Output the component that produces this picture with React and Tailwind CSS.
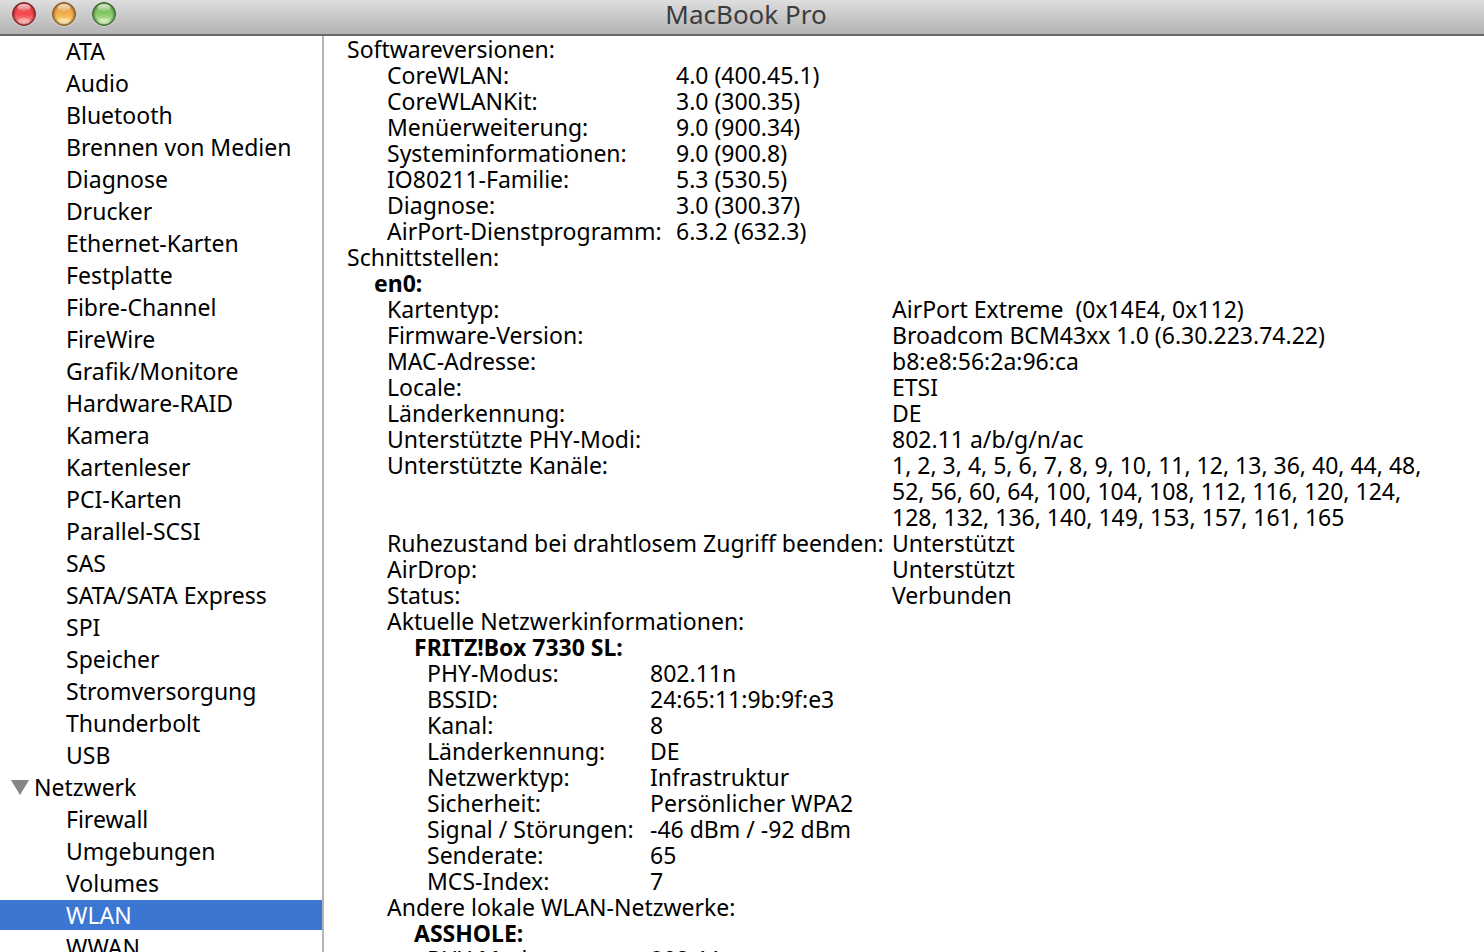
import React from "react";

const hardware = [
  "ATA",
  "Audio",
  "Bluetooth",
  "Brennen von Medien",
  "Diagnose",
  "Drucker",
  "Ethernet-Karten",
  "Festplatte",
  "Fibre-Channel",
  "FireWire",
  "Grafik/Monitore",
  "Hardware-RAID",
  "Kamera",
  "Kartenleser",
  "PCI-Karten",
  "Parallel-SCSI",
  "SAS",
  "SATA/SATA Express",
  "SPI",
  "Speicher",
  "Stromversorgung",
  "Thunderbolt",
  "USB",
];

const network = ["Firewall", "Umgebungen", "Volumes", "WLAN", "WWAN"];

const versions = [
  ["CoreWLAN:", "4.0 (400.45.1)"],
  ["CoreWLANKit:", "3.0 (300.35)"],
  ["Menüerweiterung:", "9.0 (900.34)"],
  ["Systeminformationen:", "9.0 (900.8)"],
  ["IO80211-Familie:", "5.3 (530.5)"],
  ["Diagnose:", "3.0 (300.37)"],
  ["AirPort-Dienstprogramm:", "6.3.2 (632.3)"],
];

const card = [
  ["Kartentyp:", "AirPort Extreme  (0x14E4, 0x112)"],
  ["Firmware-Version:", "Broadcom BCM43xx 1.0 (6.30.223.74.22)"],
  ["MAC-Adresse:", "b8:e8:56:2a:96:ca"],
  ["Locale:", "ETSI"],
  ["Länderkennung:", "DE"],
  ["Unterstützte PHY-Modi:", "802.11 a/b/g/n/ac"],
  [
    "Unterstützte Kanäle:",
    "1, 2, 3, 4, 5, 6, 7, 8, 9, 10, 11, 12, 13, 36, 40, 44, 48,\n52, 56, 60, 64, 100, 104, 108, 112, 116, 120, 124,\n128, 132, 136, 140, 149, 153, 157, 161, 165",
  ],
  ["Ruhezustand bei drahtlosem Zugriff beenden:", "Unterstützt"],
  ["AirDrop:", "Unterstützt"],
  ["Status:", "Verbunden"],
];

const currentNetwork = [
  ["PHY-Modus:", "802.11n"],
  ["BSSID:", "24:65:11:9b:9f:e3"],
  ["Kanal:", "8"],
  ["Länderkennung:", "DE"],
  ["Netzwerktyp:", "Infrastruktur"],
  ["Sicherheit:", "Persönlicher WPA2"],
  ["Signal / Störungen:", "-46 dBm / -92 dBm"],
  ["Senderate:", "65"],
  ["MCS-Index:", "7"],
];

const otherNetwork = [["PHY-Modus:", "802.11n"]];

const Light = ({ label, id, edge, top, mid, glow }) => (
  <button type="button" aria-label={label} className="block size-6">
    <svg viewBox="0 0 24 24" className="size-6 overflow-visible">
      <defs>
        <linearGradient id={`${id}-body`} x1="0" y1="0" x2="0" y2="1">
          <stop offset="0" stopColor={top} />
          <stop offset="0.5" stopColor={mid} />
          <stop offset="1" stopColor={glow} />
        </linearGradient>
        <radialGradient id={`${id}-rim`}>
          <stop offset="0.7" stopColor={edge} stopOpacity="0" />
          <stop offset="1" stopColor={edge} stopOpacity="0.8" />
        </radialGradient>
        <linearGradient id={`${id}-shine`} x1="0" y1="0" x2="0" y2="1">
          <stop offset="0" stopColor="#fff" stopOpacity="0.75" />
          <stop offset="1" stopColor="#fff" stopOpacity="0.1" />
        </linearGradient>
      </defs>
      <circle cx="12" cy="13" r="11.5" fill="#fff" opacity="0.45" />
      <circle cx="12" cy="12" r="11.5" fill={`url(#${id}-body)`} />
      <circle cx="12" cy="12" r="11.5" fill={`url(#${id}-rim)`} />
      <circle cx="12" cy="12" r="11.4" fill="none" stroke={edge} strokeWidth="1" />
      <ellipse cx="12" cy="5.5" rx="6.5" ry="3.6" fill={`url(#${id}-shine)`} />
      <ellipse cx="12" cy="19" rx="6" ry="3" fill="#fff" opacity="0.3" />
    </svg>
  </button>
);

const SidebarItem = ({ name, active }) => (
  <li className="pb-0.5">
    <a
      href="#"
      aria-current={active ? "page" : undefined}
      className={
        active
          ? "block bg-[#3c76d3] pl-[66px] leading-[30px] text-white"
          : "block pl-[66px] leading-[30px]"
      }
    >
      {name}
    </a>
  </li>
);

const Details = ({ rows, className }) => (
  <table className={`table-fixed ${className}`}>
    <tbody>
      {rows.map(([label, value]) => (
        <tr key={label} className="align-top">
          <th scope="row" className="p-0 text-left font-normal whitespace-nowrap">
            {label}
          </th>
          <td className="p-0 whitespace-pre">{value}</td>
        </tr>
      ))}
    </tbody>
  </table>
);

const App = () => {
  return (
    <div className="flex h-screen flex-col overflow-hidden bg-white font-['Noto_Sans',sans-serif] text-[23px] text-black">
      <header className="grid h-9 shrink-0 grid-cols-[1fr_auto_1fr] items-start border-b-2 border-[#696969] bg-linear-to-b from-[#dedede] to-[#b3b3b3]">
        <div className="flex gap-4 pt-0.5 pl-3">
          <Light label="Schließen" id="close" edge="#7c1f22" top="#d8575a" mid="#f5474b" glow="#ffb9b4" />
          <Light label="Minimieren" id="min" edge="#85551c" top="#d99a4c" mid="#f3ad49" glow="#fff3a0" />
          <Light label="Zoomen" id="zoom" edge="#35662a" top="#79b160" mid="#86c968" glow="#dcf7b8" />
        </div>
        <h1 className="pl-2 text-[26px] leading-7 text-[#3c3c3c]">MacBook Pro</h1>
      </header>

      <div className="flex min-h-0 flex-1">
        <nav className="w-[324px] shrink-0 border-r-2 border-[#b4b4b4]">
          <ul>
            {hardware.map((name) => (
              <SidebarItem key={name} name={name} />
            ))}
          </ul>
          <button type="button" className="flex h-8 items-center gap-[5px] pb-0.5 pl-[11px] leading-[30px]">
            <svg viewBox="0 0 18 15" className="h-[15px] w-[18px]">
              <path d="M0 0h18L9 15z" fill="#868686" />
            </svg>
            Netzwerk
          </button>
          <ul>
            {network.map((name) => (
              <SidebarItem key={name} name={name} active={name === "WLAN"} />
            ))}
          </ul>
        </nav>

        <main className="min-w-0 flex-1 pl-[23px] leading-[26px]">
          <h2>Softwareversionen:</h2>
          <Details rows={versions} className="ml-10 w-full [&_th]:w-[289px]" />
          <h2>Schnittstellen:</h2>
          <h3 className="pl-[27px] font-bold">en0:</h3>
          <div className="pl-10">
            <Details rows={card} className="w-full [&_th]:w-[505px]" />
            <h3>Aktuelle Netzwerkinformationen:</h3>
            <h4 className="pl-[27px] font-bold">FRITZ!Box 7330 SL:</h4>
            <Details rows={currentNetwork} className="ml-10 w-full [&_th]:w-[223px]" />
            <h3>Andere lokale WLAN-Netzwerke:</h3>
            <h4 className="pl-[27px] font-bold">ASSHOLE:</h4>
            <Details rows={otherNetwork} className="ml-10 w-full [&_th]:w-[223px]" />
          </div>
        </main>
      </div>
    </div>
  );
};

export default App;
